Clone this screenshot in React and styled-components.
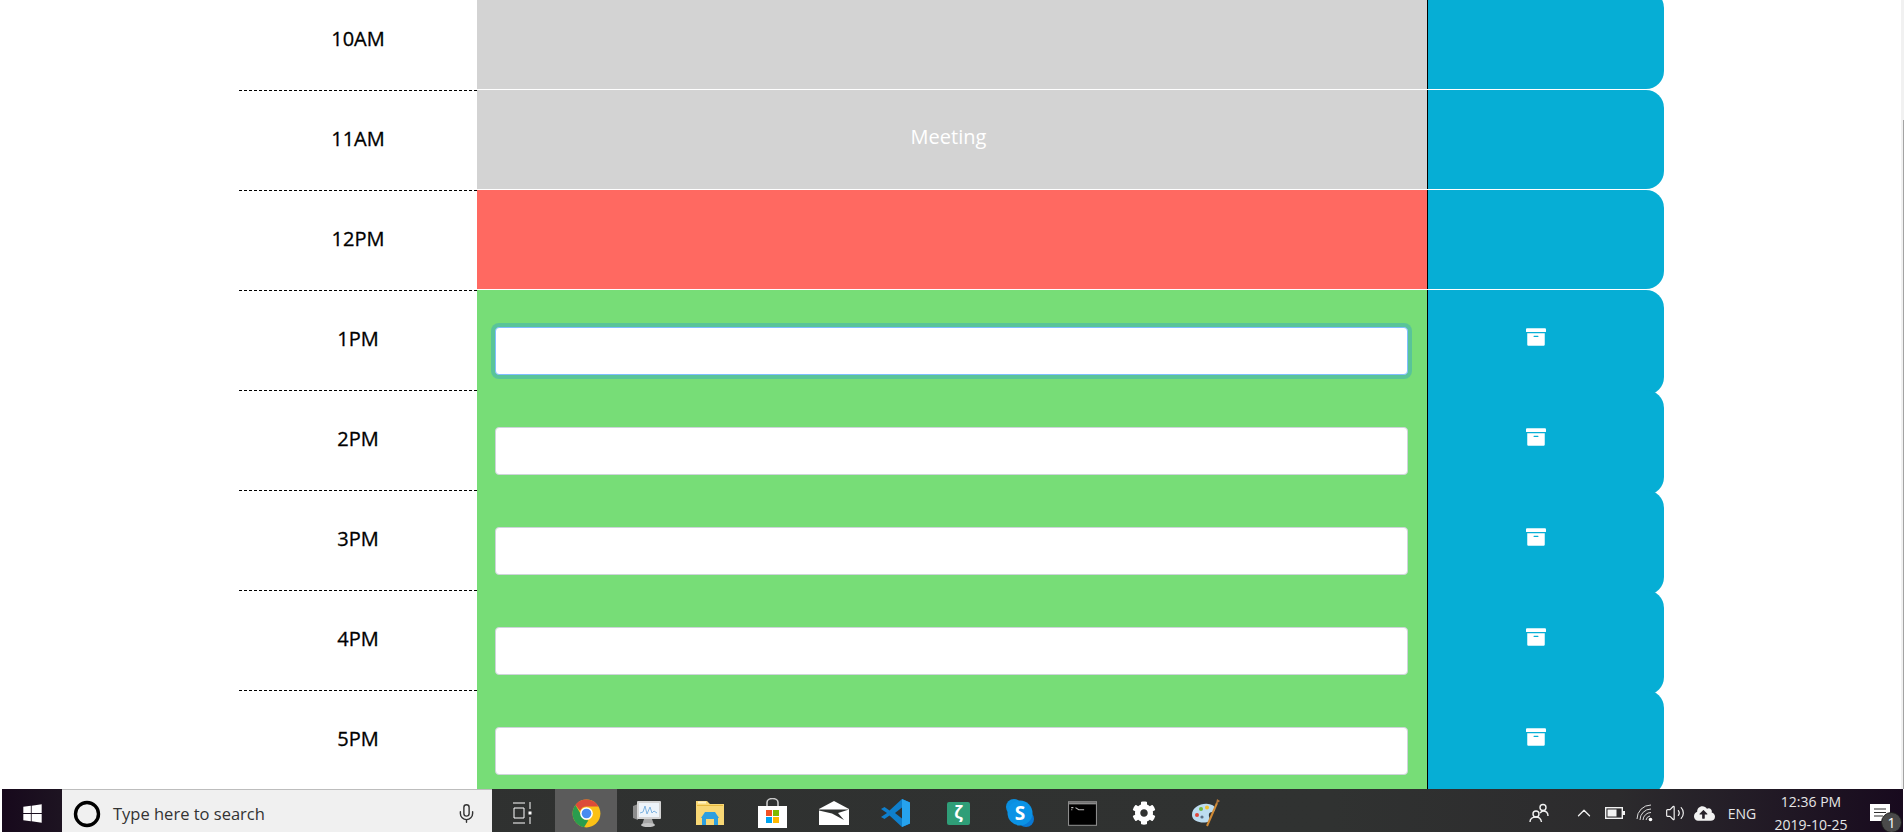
import styled, { createGlobalStyle } from 'styled-components';
import { FaArchive, FaWindows, FaCog, FaCloudUploadAlt } from 'react-icons/fa';
import { Mic, ChevronUp, Volume2 } from 'lucide-react';

const GlobalStyle = createGlobalStyle`
  html, body {
    margin: 0;
    padding: 0;
    height: 100%;
    overflow: hidden;
    background: #fff;
    font-family: "Open Sans", "Liberation Sans", sans-serif;
  }
  * {
    box-sizing: border-box;
  }
`;

const Page = styled.div`
  height: 832px;
  overflow: hidden;
  display: flex;
  flex-direction: column;
`;

const Main = styled.div`
  height: 789px;
  flex: none;
  display: flex;
  overflow: hidden;
`;

const Schedule = styled.div`
  flex: 1;
  margin-top: -10px;
  padding-left: 239px;
`;

const Scrollbar = styled.div`
  width: 3px;
  padding: 120px 0 0 2px;
  background: #f1f1f1;
`;

const Thumb = styled.div`
  height: 100%;
  background: #a3a3a3;
`;

const Row = styled.div`
  height: 100px;
  display: flex;
  align-items: flex-start;
`;

const Hour = styled.div`
  width: 238px;
  height: 100px;
  padding-bottom: 5px;
  border-top: 1px dashed #000;
  display: flex;
  align-items: center;
  justify-content: center;
  font-size: 20px;
  color: #000;
  -webkit-text-stroke: 0.3px #000;
`;

const tones = { past: '#d3d3d3', present: '#ff6961', future: '#77dd77' };

const Block = styled.div`
  width: 950px;
  height: ${(p) => (p.$tone === 'future' ? '100px' : '99px')};
  background: ${(p) => tones[p.$tone]};
  color: #fff;
  font-size: 20px;
  display: flex;
  justify-content: center;
  align-items: ${(p) => (p.$tone === 'future' ? 'flex-start' : 'center')};
  padding: ${(p) => (p.$tone === 'future' ? '37px 19px 0 18px' : '0 7px 6px 0')};
`;

const TaskInput = styled.input`
  width: 100%;
  height: 48px;
  background: #fff;
  border: 1px solid ${(p) => (p.$focused ? '#80bdff' : '#ced4da')};
  border-radius: 4px;
  outline: none;
  box-shadow: ${(p) => (p.$focused ? '0 0 0 4px rgba(0, 123, 255, 0.25)' : 'none')};
`;

const SaveButton = styled.button`
  width: 237px;
  height: ${(p) => (p.$open ? '105px' : '99px')};
  flex: none;
  margin: 0;
  padding: 37px 20px 0 0;
  display: flex;
  justify-content: center;
  align-items: flex-start;
  background: #06aed5;
  color: #fff;
  border: 0;
  border-left: 1px solid #000;
  border-radius: 0 18px 18px 0;
`;

/* taskbar */
const Taskbar = styled.div`
  height: 48px;
  flex: none;
  margin: 0 1px 0 2px;
  display: flex;
  align-items: stretch;
  background: linear-gradient(90deg, #17091c 0, #2f3130 12%, #303231 70%, #2c2b2d 85%, #180a1e 100%);
`;

const StartButton = styled.div`
  width: 60px;
  flex: none;
  display: flex;
  align-items: center;
  justify-content: center;
  color: #fff;
`;

const SearchBox = styled.div`
  width: 430px;
  flex: none;
  display: flex;
  align-items: center;
  padding: 0 15px 0 11px;
  gap: 12px;
  background: #f0f0f0;
  border-top: 1px solid #bdbdbd;
  color: #333;
`;

const SearchText = styled.span`
  flex: 1;
  font-size: 16.5px;
  white-space: nowrap;
`;

const AppSlot = styled.div`
  width: ${(p) => p.$w || 62}px;
  flex: none;
  display: flex;
  align-items: center;
  justify-content: center;
  background: ${(p) => (p.$active ? '#5b5b5b' : 'transparent')};
  color: #fff;
`;

const TaskViewSlot = styled(AppSlot)`
  padding-right: 4px;
`;

const Tray = styled.div`
  margin-left: auto;
  display: flex;
  align-items: stretch;
`;

const TraySlot = styled.div`
  width: ${(p) => p.$w}px;
  display: flex;
  align-items: center;
  justify-content: center;
  color: #f2f2f2;
`;

const Lang = styled.span`
  font-size: 14px;
  color: #e6e6e6;
`;

const Clock = styled.div`
  width: 92px;
  padding-top: 3px;
  display: flex;
  flex-direction: column;
  align-items: center;
  gap: 4px;
  font-size: 14px;
  line-height: 19px;
  color: #e6e6e6;
`;

const Notify = styled.div`
  width: 46px;
  position: relative;
  display: flex;
  align-items: center;
  justify-content: center;
`;

const Badge = styled.span`
  position: absolute;
  left: 24px;
  top: 23px;
  width: 21px;
  height: 21px;
  border-radius: 50%;
  background: #4a4a4a;
  border: 1px solid #1c1c1c;
  color: #fff;
  font-size: 14px;
  line-height: 20px;
  text-align: center;
`;

const TaskViewIcon = () => (
  <svg width="20" height="24" viewBox="0 0 20 24" fill="none" stroke="#fff" strokeWidth="1">
    <path d="M1 2h12M1 22h12M2 7h10v10H2zM18 1v7M18 16v7" />
    <rect x="16.5" y="10.5" width="3" height="3" fill="#fff" stroke="none" />
  </svg>
);

const ChromeIcon = () => (
  <svg width="29" height="29" viewBox="0 0 48 48">
    <circle cx="24" cy="24" r="23" fill="#fbc116" />
    <path d="M24 1a23 23 0 0 1 20 11.5H24a11.5 11.5 0 0 0-10.6 7L5.6 10A23 23 0 0 1 24 1z" fill="#dd4b39" />
    <path d="M5.6 10l10 17a11.5 11.5 0 0 0 11.6 8.2L20 46.7A23 23 0 0 1 5.6 10z" fill="#2a9d4e" />
    <circle cx="24" cy="24" r="10.5" fill="#fff" />
    <circle cx="24" cy="24" r="8" fill="#4a8bf0" />
  </svg>
);

const MonitorIcon = () => (
  <svg width="30" height="30" viewBox="0 0 30 30">
    <path d="M0 8l5-2v16l-5-2z" fill="#8c8c8c" />
    <rect x="4" y="3" width="24" height="18" rx="1" fill="#d4d4d4" />
    <rect x="6" y="5" width="20" height="14" fill="#eef4fa" />
    <path d="M7 15l3-1 2-6 2 8 3-7 2 6 2-2 3 2" fill="none" stroke="#7fb3e0" strokeWidth="1" />
    <path d="M11 21h8l2 6H9z" fill="#a6a6a6" />
    <ellipse cx="15" cy="27" rx="7" ry="2" fill="#c4c4c4" />
  </svg>
);

const FolderIcon = () => (
  <svg width="28" height="26" viewBox="0 0 28 26">
    <path d="M0 1h11l3 3h14v21H0z" fill="#f8d775" />
    <rect x="1" y="5" width="26" height="1" fill="#e6b93f" />
    <rect x="2" y="1.5" width="8" height="2" fill="#fff3c4" />
    <path d="M6 25v-7h-1l4-6h10l4 6h-1v7h-4v-6h-8v6z" fill="#2d9fe0" />
  </svg>
);

const StoreIcon = () => (
  <svg width="29" height="30" viewBox="0 0 29 30">
    <path d="M9 8V4.5a5.5 4 0 0 1 11 0V8" fill="none" stroke="#c9c9c9" strokeWidth="1.6" />
    <rect x="0" y="8" width="29" height="22" fill="#fff" />
    <rect x="8" y="12" width="6" height="6" fill="#f25022" />
    <rect x="15" y="12" width="6" height="6" fill="#7fba00" />
    <rect x="8" y="19" width="6" height="6" fill="#00a4ef" />
    <rect x="15" y="19" width="6" height="6" fill="#ffb900" />
  </svg>
);

const MailIcon = () => (
  <svg width="30" height="24" viewBox="0 0 30 24">
    <path d="M0 8L15 0l15 8v16H0z" fill="#fff" />
    <path d="M0 8.5h30L19 12l6 7-12-6.5L0 9.5z" fill="#2f3130" />
  </svg>
);

const CodeIcon = () => (
  <svg width="30" height="30" viewBox="0 0 30 30">
    <path d="M21 1l8 3.5v21L21 29 8.5 17.5 3.5 21 0 19l6-4-6-4 3.5-2 5 3.5z" fill="#0f7fcc" />
    <path d="M21 1l8 3.5v21L21 29z" fill="#26a3ee" />
    <path d="M21 9.5L14 15l7 5.5z" fill="#2f3130" />
  </svg>
);

const ZetaIcon = () => (
  <svg width="23" height="23" viewBox="0 0 23 23">
    <rect width="23" height="23" rx="2" fill="#2f9e78" />
    <text x="11.5" y="17" textAnchor="middle" fontSize="17" fontWeight="700" fill="#fff" fontFamily="Open Sans">ζ</text>
  </svg>
);

const SkypeIcon = () => (
  <svg width="28" height="28" viewBox="0 0 28 28">
    <circle cx="8" cy="8" r="8" fill="#0a8fe0" />
    <circle cx="20" cy="20" r="8" fill="#0a78d4" />
    <circle cx="14" cy="14" r="12.5" fill="#0b93e6" />
    <text x="14" y="20.5" textAnchor="middle" fontSize="19" fontWeight="700" fill="#fff" fontFamily="Open Sans">S</text>
  </svg>
);

const TerminalIcon = () => (
  <svg width="29" height="25" viewBox="0 0 27 23">
    <rect x="0.5" y="0.5" width="26" height="22" fill="#000" stroke="#8c8c8c" />
    <rect x="1" y="1" width="25" height="2" fill="#8c8c8c" />
    <path d="M3 6h2M3 8h1M7 6l3 2h5" stroke="#bbb" strokeWidth="1" fill="none" />
  </svg>
);

const PaintIcon = () => (
  <svg width="30" height="30" viewBox="0 0 30 30">
    <path d="M1 17C1 9 10 5 17 6c5 .6 8 3 7 6-1 3-5 1-6 4-.8 3 2 5 0 7-3 3-17 2-17-6z" fill="#bcdcf0" />
    <circle cx="6" cy="17" r="2" fill="#e0453a" />
    <circle cx="10" cy="11" r="2" fill="#6fb83f" />
    <circle cx="16" cy="9.5" r="2" fill="#f2c230" />
    <circle cx="11" cy="19" r="1.6" fill="#5a6f85" />
    <path d="M26 5L16 28" stroke="#d08a35" strokeWidth="2" />
    <path d="M25 6l1-5 3 2z" fill="#b5783a" />
  </svg>
);

const PeopleIcon = () => (
  <svg width="20" height="20" viewBox="0 0 20 20" fill="none" stroke="#f2f2f2" strokeWidth="1.4">
    <circle cx="7" cy="11" r="3" />
    <path d="M1 19c0-3 2.5-5 6-5s5 2 5.5 5" />
    <circle cx="14" cy="4.5" r="3" />
    <path d="M11 10c1-1 2-2 3-2 3 0 5 2 5 5" />
  </svg>
);

const BatteryIcon = () => (
  <svg width="20" height="12" viewBox="0 0 20 12" fill="none">
    <rect x="0.7" y="0.7" width="16.6" height="10.6" stroke="#f2f2f2" strokeWidth="1.4" />
    <rect x="2.5" y="2.5" width="9" height="7" fill="#f2f2f2" />
    <rect x="18" y="4" width="2" height="4" fill="#f2f2f2" />
  </svg>
);

const WifiIcon = () => (
  <svg width="18" height="18" viewBox="0 0 18 18" fill="none" stroke="#dcdcdc" strokeWidth="1">
    <path d="M1 15A14 14 0 0 1 15 1M4 16A11 11 0 0 1 15 5M7 16A8 8 0 0 1 15 8.5M10 16a5 5 0 0 1 4-4" />
    <circle cx="14.5" cy="15.5" r="1.8" fill="#fff" stroke="none" />
  </svg>
);

const NotifyIcon = () => (
  <svg width="20" height="18" viewBox="0 0 20 18">
    <path d="M0 0h20v17H0z" fill="#fff" />
    <path d="M4 5h12M4 8.5h12M4 12h9" stroke="#2f2f2f" strokeWidth="1.2" />
  </svg>
);

const hours = [
  { label: '10AM', tone: 'past' },
  { label: '11AM', tone: 'past', text: 'Meeting' },
  { label: '12PM', tone: 'present' },
  { label: '1PM', tone: 'future', focused: true },
  { label: '2PM', tone: 'future' },
  { label: '3PM', tone: 'future' },
  { label: '4PM', tone: 'future' },
  { label: '5PM', tone: 'future' },
];

const apps = [MonitorIcon, FolderIcon, StoreIcon, MailIcon, CodeIcon, ZetaIcon, SkypeIcon, TerminalIcon];

const App = () => {
  return (
    <Page>
      <GlobalStyle />
      <Main>
        <Schedule>
          {hours.map((h) => {
            const open = h.tone === 'future';
            return (
              <Row key={h.label}>
                <Hour>{h.label}</Hour>
                <Block $tone={h.tone}>
                  {open ? <TaskInput $focused={h.focused} /> : h.text}
                </Block>
                <SaveButton $open={open}>{open && <FaArchive size={20} />}</SaveButton>
              </Row>
            );
          })}
        </Schedule>
        <Scrollbar>
          <Thumb />
        </Scrollbar>
      </Main>
      <Taskbar>
        <StartButton>
          <FaWindows size={21} />
        </StartButton>
        <SearchBox>
          <svg width="28" height="28" viewBox="0 0 28 28" fill="none">
            <circle cx="14" cy="14" r="11.5" stroke="#000" strokeWidth="3.4" />
          </svg>
          <SearchText>Type here to search</SearchText>
          <Mic size={21} strokeWidth={1.6} />
        </SearchBox>
        <TaskViewSlot $w={63}>
          <TaskViewIcon />
        </TaskViewSlot>
        <AppSlot $active>
          <ChromeIcon />
        </AppSlot>
        {apps.map((Icon, i) => (
          <AppSlot key={i}>
            <Icon />
          </AppSlot>
        ))}
        <AppSlot>
          <FaCog size={24} />
        </AppSlot>
        <AppSlot>
          <PaintIcon />
        </AppSlot>
        <Tray>
          <TraySlot $w={58}>
            <PeopleIcon />
          </TraySlot>
          <TraySlot $w={32}>
            <ChevronUp size={22} strokeWidth={1.4} />
          </TraySlot>
          <TraySlot $w={29}>
            <BatteryIcon />
          </TraySlot>
          <TraySlot $w={31}>
            <WifiIcon />
          </TraySlot>
          <TraySlot $w={29}>
            <Volume2 size={20} strokeWidth={1.4} />
          </TraySlot>
          <TraySlot $w={30}>
            <FaCloudUploadAlt size={21} />
          </TraySlot>
          <TraySlot $w={46}>
            <Lang>ENG</Lang>
          </TraySlot>
          <Clock>
            <span>12:36 PM</span>
            <span>2019-10-25</span>
          </Clock>
          <Notify>
            <NotifyIcon />
            <Badge>1</Badge>
          </Notify>
        </Tray>
      </Taskbar>
    </Page>
  );
};

export default App;
